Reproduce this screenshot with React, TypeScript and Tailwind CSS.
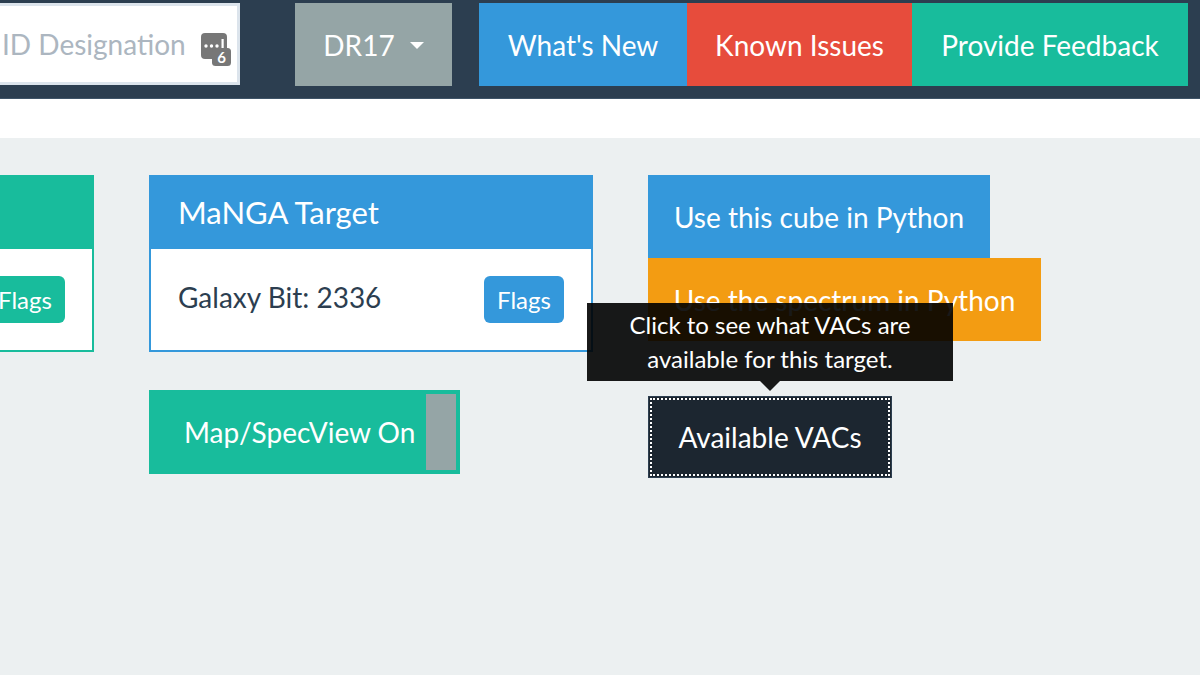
function IdIcon() {
  return (
    <svg className="absolute left-[201px] top-[27px]" width="31" height="34" viewBox="0 0 31 34">
      <rect x="0" y="0" width="26" height="26" rx="4" fill="#777" />
      <circle cx="5" cy="13" r="1.7" fill="#fff" />
      <circle cx="10.5" cy="13" r="1.7" fill="#fff" />
      <circle cx="16" cy="13" r="1.7" fill="#fff" />
      <rect x="20.5" y="6" width="2.2" height="9" fill="#fff" />
      <rect x="11" y="15" width="19" height="18" rx="3.5" fill="#777" />
      <text x="20.5" y="30" textAnchor="middle" fontSize="15" fontWeight="700" fill="#fff" fontFamily="Lato, sans-serif">
        6
      </text>
    </svg>
  );
}

function NavButton({ label, className }: { label: string; className: string }) {
  return (
    <button className={`flex h-[83px] items-center justify-center text-[28px] text-white ${className}`}>
      {label}
    </button>
  );
}

function TargetCard({ title, text, color, className }: { title: string; text: string; color: string; className: string }) {
  const heading = color === "blue" ? "bg-[#3498db]" : "bg-[#18bc9c]";
  const frame = color === "blue" ? "border-[#3498db]" : "border-[#18bc9c]";
  return (
    <div className={`h-[177px] w-[444px] shrink-0 ${className}`}>
      <div className={`flex h-[74px] items-center pl-[29px] text-[31px] text-white ${heading}`}>{title}</div>
      <div className={`flex h-[103px] items-start justify-between border-2 border-t-0 bg-white pl-[27px] pr-[27px] ${frame}`}>
        <span className="mt-[30px] text-[28px] leading-[36px] text-[#2c3e50]">{text}</span>
        <button className={`mt-[27px] flex h-[47px] w-[80px] items-center justify-center rounded-[6px] text-[24px] text-white ${heading}`}>
          Flags
        </button>
      </div>
    </div>
  );
}

export default function App() {
  return (
    <div className="h-[675px] w-[1200px] overflow-hidden bg-[#ecf0f1] font-['Lato',sans-serif]">
      <header className="flex h-[99px] items-start border-b border-[#3f5468] bg-[#2c3e50] pt-[3px]">
        <div className="relative flex h-[82px] w-[240px] shrink-0 items-center border-[3px] border-l-0 border-[#dce4ec] bg-white">
          <span className="ml-[2px] text-[28px] text-[#acb6c0]">ID Designation</span>
          <IdIcon />
        </div>
        <button className="ml-[55px] flex h-[83px] w-[157px] items-center justify-center gap-[15px] bg-[#95a5a6] text-[28px] text-white">
          DR17
          <span className="mt-[1px] h-0 w-0 border-x-[7px] border-t-[7px] border-x-transparent border-t-white" />
        </button>
        <NavButton label="What's New" className="ml-[27px] w-[208px] bg-[#3498db]" />
        <NavButton label="Known Issues" className="w-[225px] bg-[#e74c3c]" />
        <NavButton label="Provide Feedback" className="w-[276px] bg-[#18bc9c]" />
      </header>
      <div className="h-[39px] bg-white" />
      <main className="flex items-start gap-[55px] pt-[37px]">
        <TargetCard title="Galaxy" text="" color="green" className="ml-[-350px]" />
        <div className="flex flex-col items-start gap-[38px]">
          <TargetCard title="MaNGA Target" text="Galaxy Bit: 2336" color="blue" className="" />
          <button className="flex h-[84px] w-[311px] items-center justify-between border-[4px] border-[#18bc9c] bg-[#18bc9c] pl-[31px] text-[28px] text-white">
            Map/SpecView On
            <span className="h-[76px] w-[30px] bg-[#95a5a6]" />
          </button>
        </div>
        <div className="relative flex flex-col items-start">
          <button className="flex h-[83px] w-[342px] items-center justify-center bg-[#3498db] text-[28px] text-white">
            Use this cube in Python
          </button>
          <button className="flex h-[83px] w-[393px] items-center justify-center bg-[#f39c12] text-[28px] text-white">
            Use the spectrum in Python
          </button>
          <button className="mt-[55px] flex h-[82px] w-[244px] items-center justify-center border border-[#2c3e50] bg-[#1c2630] text-[28px] text-white outline-2 outline-offset-[-4px] outline-white outline-dotted">
            Available VACs
          </button>
          <div className="absolute left-[-61px] top-[128px] w-[366px]">
            <div className="flex h-[78px] flex-col items-center justify-center bg-black/90 text-[24px] leading-[34px] text-white">
              <span>Click to see what VACs are</span>
              <span>available for this target.</span>
            </div>
            <div className="mx-auto h-0 w-0 border-x-[10px] border-t-[10px] border-x-transparent border-t-black/90" />
          </div>
        </div>
      </main>
    </div>
  );
}
